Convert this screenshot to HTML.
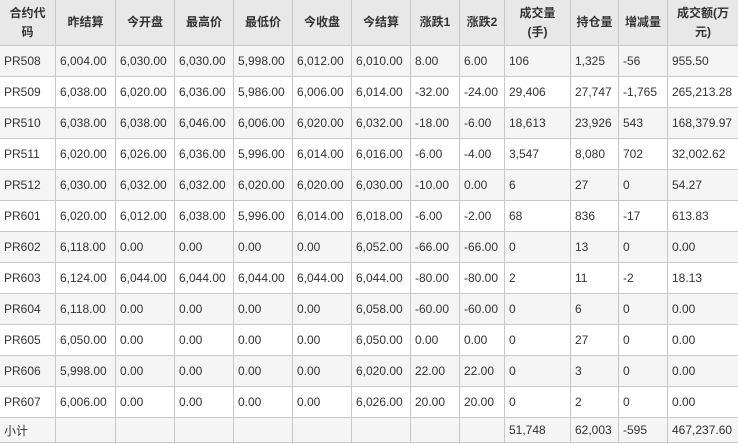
<!DOCTYPE html>
<html><head><meta charset="utf-8"><style>
body{margin:0;background:#fff;}
table{border-collapse:collapse;table-layout:fixed;width:739px;font-family:"Liberation Sans","Noto Sans CJK SC",sans-serif;font-size:12px;color:#333;}
td,th{border:1px solid #c8c8c8;padding:0 0 0 4px;white-space:nowrap;overflow:hidden;text-align:left;height:30px;}
th{background:#e8e8e8;font-weight:bold;height:45px;text-align:center;line-height:19px;padding:0 2px;white-space:nowrap;}
tr.g td{background:#f5f5f5;}
tr.s td{height:24px;}
table{margin:-1px 0 0 -1px;}
</style></head><body>
<table>
<colgroup><col style="width:56px"><col style="width:60px"><col style="width:59px"><col style="width:59px"><col style="width:59px"><col style="width:59px"><col style="width:59px"><col style="width:49px"><col style="width:45px"><col style="width:66px"><col style="width:48px"><col style="width:49px"><col style="width:71px"></colgroup>
<tr><th>合约代<br>码</th><th>昨结算</th><th>今开盘</th><th>最高价</th><th>最低价</th><th>今收盘</th><th>今结算</th><th>涨跌1</th><th>涨跌2</th><th>成交量<br>(手)</th><th>持仓量</th><th>增减量</th><th>成交额(万<br>元)</th></tr>
<tr class="g"><td>PR508</td><td>6,004.00</td><td>6,030.00</td><td>6,030.00</td><td>5,998.00</td><td>6,012.00</td><td>6,010.00</td><td>8.00</td><td>6.00</td><td>106</td><td>1,325</td><td>-56</td><td>955.50</td></tr>
<tr><td>PR509</td><td>6,038.00</td><td>6,020.00</td><td>6,036.00</td><td>5,986.00</td><td>6,006.00</td><td>6,014.00</td><td>-32.00</td><td>-24.00</td><td>29,406</td><td>27,747</td><td>-1,765</td><td>265,213.28</td></tr>
<tr class="g"><td>PR510</td><td>6,038.00</td><td>6,038.00</td><td>6,046.00</td><td>6,006.00</td><td>6,020.00</td><td>6,032.00</td><td>-18.00</td><td>-6.00</td><td>18,613</td><td>23,926</td><td>543</td><td>168,379.97</td></tr>
<tr><td>PR511</td><td>6,020.00</td><td>6,026.00</td><td>6,036.00</td><td>5,996.00</td><td>6,014.00</td><td>6,016.00</td><td>-6.00</td><td>-4.00</td><td>3,547</td><td>8,080</td><td>702</td><td>32,002.62</td></tr>
<tr class="g"><td>PR512</td><td>6,030.00</td><td>6,032.00</td><td>6,032.00</td><td>6,020.00</td><td>6,020.00</td><td>6,030.00</td><td>-10.00</td><td>0.00</td><td>6</td><td>27</td><td>0</td><td>54.27</td></tr>
<tr><td>PR601</td><td>6,020.00</td><td>6,012.00</td><td>6,038.00</td><td>5,996.00</td><td>6,014.00</td><td>6,018.00</td><td>-6.00</td><td>-2.00</td><td>68</td><td>836</td><td>-17</td><td>613.83</td></tr>
<tr class="g"><td>PR602</td><td>6,118.00</td><td>0.00</td><td>0.00</td><td>0.00</td><td>0.00</td><td>6,052.00</td><td>-66.00</td><td>-66.00</td><td>0</td><td>13</td><td>0</td><td>0.00</td></tr>
<tr><td>PR603</td><td>6,124.00</td><td>6,044.00</td><td>6,044.00</td><td>6,044.00</td><td>6,044.00</td><td>6,044.00</td><td>-80.00</td><td>-80.00</td><td>2</td><td>11</td><td>-2</td><td>18.13</td></tr>
<tr class="g"><td>PR604</td><td>6,118.00</td><td>0.00</td><td>0.00</td><td>0.00</td><td>0.00</td><td>6,058.00</td><td>-60.00</td><td>-60.00</td><td>0</td><td>6</td><td>0</td><td>0.00</td></tr>
<tr><td>PR605</td><td>6,050.00</td><td>0.00</td><td>0.00</td><td>0.00</td><td>0.00</td><td>6,050.00</td><td>0.00</td><td>0.00</td><td>0</td><td>27</td><td>0</td><td>0.00</td></tr>
<tr class="g"><td>PR606</td><td>5,998.00</td><td>0.00</td><td>0.00</td><td>0.00</td><td>0.00</td><td>6,020.00</td><td>22.00</td><td>22.00</td><td>0</td><td>3</td><td>0</td><td>0.00</td></tr>
<tr><td>PR607</td><td>6,006.00</td><td>0.00</td><td>0.00</td><td>0.00</td><td>0.00</td><td>6,026.00</td><td>20.00</td><td>20.00</td><td>0</td><td>2</td><td>0</td><td>0.00</td></tr>
<tr class="g s"><td>小计</td><td></td><td></td><td></td><td></td><td></td><td></td><td></td><td></td><td>51,748</td><td>62,003</td><td>-595</td><td>467,237.60</td></tr>
</table>
</body></html>
